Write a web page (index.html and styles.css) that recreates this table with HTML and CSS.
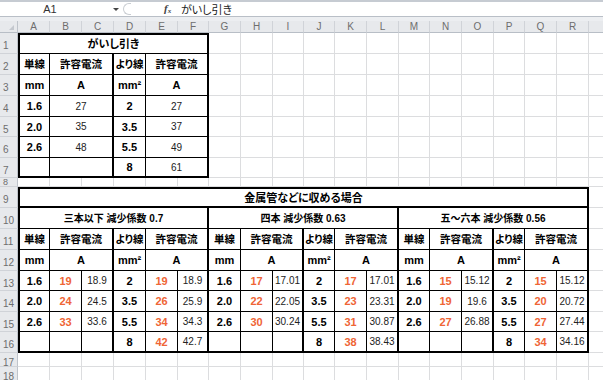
FILE: index.html
```html
<!DOCTYPE html>
<html lang="ja">
<head>
<meta charset="utf-8">
<title>がいし引き</title>
<link rel="stylesheet" href="styles.css">
</head>
<body>
<div class="formula-bar">
  <div class="name-box"><span class="name">A1</span><span class="caret"></span></div>
  <div class="fx-area"><span class="paren"></span><span class="fx"><i>f</i><sub>x</sub></span></div>
  <div class="formula">がいし引き</div>
</div>
<div class="band"></div>
<div class="sheet">
  <div class="row heads">
    <div class="corner"><span class="tri"></span></div>
    <div class="ch">A</div><div class="ch">B</div><div class="ch">C</div><div class="ch">D</div><div class="ch">E</div><div class="ch">F</div>
    <div class="ch">G</div><div class="ch">H</div><div class="ch">I</div><div class="ch">J</div><div class="ch">K</div><div class="ch">L</div>
    <div class="ch">M</div><div class="ch">N</div><div class="ch">O</div><div class="ch">P</div><div class="ch">Q</div><div class="ch">R</div><div class="ch"></div>
  </div>

  <div class="row h21"><div class="rh">1</div><div class="c s6 bl bt br title">がいし引き</div></div>
  <div class="row h21"><div class="rh">2</div>
    <div class="c bl jp">単線</div><div class="c s2 br jp">許容電流</div><div class="c jp">より線</div><div class="c s2 br jp">許容電流</div>
  </div>
  <div class="row h21"><div class="rh">3</div>
    <div class="c bl b">mm</div><div class="c s2 br b">A</div><div class="c b">mm²</div><div class="c s2 br b">A</div>
  </div>
  <div class="row h21"><div class="rh">4</div>
    <div class="c bl b">1.6</div><div class="c s2 br num">27</div><div class="c b">2</div><div class="c s2 br num">27</div>
  </div>
  <div class="row h20"><div class="rh">5</div>
    <div class="c bl b">2.0</div><div class="c s2 br num">35</div><div class="c b">3.5</div><div class="c s2 br num">37</div>
  </div>
  <div class="row h21"><div class="rh">6</div>
    <div class="c bl b">2.6</div><div class="c s2 br num">48</div><div class="c b">5.5</div><div class="c s2 br num">49</div>
  </div>
  <div class="row h20"><div class="rh">7</div>
    <div class="c bl bb"></div><div class="c s2 br bb"></div><div class="c b bb">8</div><div class="c s2 br bb num">61</div>
  </div>
  <div class="row h9"><div class="rh short">8</div></div>

  <div class="row h21"><div class="rh">9</div><div class="c s18 bl bt br bb title">金属管などに収める場合</div></div>
  <div class="row h21"><div class="rh">10</div>
    <div class="c s6 bl br sub">三本以下 減少係数 0.7</div>
    <div class="c s6 br sub">四本 減少係数 0.63</div>
    <div class="c s6 br sub">五～六本 減少係数 0.56</div>
  </div>
  <div class="row h21"><div class="rh">11</div>
    <div class="c bl jp">単線</div><div class="c s2 br jp">許容電流</div><div class="c jp">より線</div><div class="c s2 br jp">許容電流</div>
    <div class="c jp">単線</div><div class="c s2 br jp">許容電流</div><div class="c jp">より線</div><div class="c s2 br jp">許容電流</div>
    <div class="c jp">単線</div><div class="c s2 br jp">許容電流</div><div class="c jp">より線</div><div class="c s2 br jp">許容電流</div>
  </div>
  <div class="row h21"><div class="rh">12</div>
    <div class="c bl b">mm</div><div class="c s2 br b">A</div><div class="c b">mm²</div><div class="c s2 br b">A</div>
    <div class="c b">mm</div><div class="c s2 br b">A</div><div class="c b">mm²</div><div class="c s2 br b">A</div>
    <div class="c b">mm</div><div class="c s2 br b">A</div><div class="c b">mm²</div><div class="c s2 br b">A</div>
  </div>
  <div class="row h20"><div class="rh">13</div>
    <div class="c bl b">1.6</div><div class="c o">19</div><div class="c br num">18.9</div><div class="c b">2</div><div class="c o">19</div><div class="c br num">18.9</div>
    <div class="c b">1.6</div><div class="c o">17</div><div class="c br num">17.01</div><div class="c b">2</div><div class="c o">17</div><div class="c br num">17.01</div>
    <div class="c b">1.6</div><div class="c o">15</div><div class="c br num">15.12</div><div class="c b">2</div><div class="c o">15</div><div class="c br num">15.12</div>
  </div>
  <div class="row h21"><div class="rh">14</div>
    <div class="c bl b">2.0</div><div class="c o">24</div><div class="c br num">24.5</div><div class="c b">3.5</div><div class="c o">26</div><div class="c br num">25.9</div>
    <div class="c b">2.0</div><div class="c o">22</div><div class="c br num">22.05</div><div class="c b">3.5</div><div class="c o">23</div><div class="c br num">23.31</div>
    <div class="c b">2.0</div><div class="c o">19</div><div class="c br num">19.6</div><div class="c b">3.5</div><div class="c o">20</div><div class="c br num">20.72</div>
  </div>
  <div class="row h20"><div class="rh">15</div>
    <div class="c bl b">2.6</div><div class="c o">33</div><div class="c br num">33.6</div><div class="c b">5.5</div><div class="c o">34</div><div class="c br num">34.3</div>
    <div class="c b">2.6</div><div class="c o">30</div><div class="c br num">30.24</div><div class="c b">5.5</div><div class="c o">31</div><div class="c br num">30.87</div>
    <div class="c b">2.6</div><div class="c o">27</div><div class="c br num">26.88</div><div class="c b">5.5</div><div class="c o">27</div><div class="c br num">27.44</div>
  </div>
  <div class="row h21"><div class="rh">16</div>
    <div class="c bl bb"></div><div class="c bb"></div><div class="c br bb"></div><div class="c b bb">8</div><div class="c o bb">42</div><div class="c br bb num">42.7</div>
    <div class="c bb"></div><div class="c bb"></div><div class="c br bb"></div><div class="c b bb">8</div><div class="c o bb">38</div><div class="c br bb num">38.43</div>
    <div class="c bb"></div><div class="c bb"></div><div class="c br bb"></div><div class="c b bb">8</div><div class="c o bb">34</div><div class="c br bb num">34.16</div>
  </div>
  <div class="row h14"><div class="rh">17</div></div>
  <div class="row h14"><div class="rh">18</div></div>
</div>
</body>
</html>
```
FILE: styles.css
```css
* { box-sizing: border-box; }

html, body {
  margin: 0;
  padding: 0;
}

body {
  width: 603px;
  height: 380px;
  overflow: hidden;
  background: #ffffff;
  color: #000;
  font-family: "Liberation Sans", "Noto Sans CJK JP", sans-serif;
  font-feature-settings: "palt";
}

/* ---------- formula bar ---------- */
.formula-bar {
  display: flex;
  align-items: center;
  height: 16px;
  border-top: 2px solid #c6cbd2;
  background: #fff;
  font-size: 11px;
  color: #333;
}

.name-box {
  width: 121px;
  display: flex;
  align-items: center;
}

.name {
  width: 100px;
  text-align: center;
}

.caret {
  margin-left: 13px;
  width: 0;
  height: 0;
  border-left: 3px solid transparent;
  border-right: 3px solid transparent;
  border-top: 3px solid #444;
  margin-top: 1px;
}

.fx-area {
  width: 60px;
  display: flex;
  align-items: center;
}

.paren {
  margin-left: 2px;
  width: 8px;
  height: 12px;
  border: 1px solid #c9cdd2;
  border-right: none;
  border-radius: 6px 0 0 6px;
}

.fx {
  margin-left: 33px;
  font-family: "Liberation Serif", serif;
  font-weight: bold;
  font-size: 11px;
  color: #444;
  line-height: 1;
}

.fx sub {
  font-size: 7px;
  font-style: italic;
  vertical-align: -1px;
}

.formula {
  font-size: 11px;
  color: #222;
}

.band {
  height: 5px;
  border-top: 1px solid #b9bfc7;
  background: #eceef1;
}

/* ---------- sheet ---------- */
.sheet {
  --grid: #dcdddf;
  background: linear-gradient(90deg,
    transparent 49px, var(--grid) 49px 50px,
    transparent 50px 81px, var(--grid) 81px 82px,
    transparent 82px 113px, var(--grid) 113px 114px,
    transparent 114px 145px, var(--grid) 145px 146px,
    transparent 146px 177px, var(--grid) 177px 178px,
    transparent 178px 208px, var(--grid) 208px 209px,
    transparent 209px 240px, var(--grid) 240px 241px,
    transparent 241px 272px, var(--grid) 272px 273px,
    transparent 273px 303px, var(--grid) 303px 304px,
    transparent 304px 334px, var(--grid) 334px 335px,
    transparent 335px 366px, var(--grid) 366px 367px,
    transparent 367px 398px, var(--grid) 398px 399px,
    transparent 399px 429px, var(--grid) 429px 430px,
    transparent 430px 461px, var(--grid) 461px 462px,
    transparent 462px 493px, var(--grid) 493px 494px,
    transparent 494px 524px, var(--grid) 524px 525px,
    transparent 525px 556px, var(--grid) 556px 557px,
    transparent 557px 588px, var(--grid) 588px 589px,
    transparent 589px);
}

.row {
  display: grid;
  grid-template-columns: 18px 32px 32px 32px 32px 32px 31px 32px 32px 31px 31px 32px 32px 31px 32px 32px 31px 32px 32px 32px;
  background: linear-gradient(to top, var(--grid) 1px, transparent 1px);
  width: 620px;
}

.h21 { height: 21px; }
.h20 { height: 20px; }
.h14 { height: 14px; }
.h9 { height: 9px; }

.heads { height: 12px; }

.corner,
.ch {
  background: #e7e9ec;
  border-right: 1px solid #d0d3d8;
  border-bottom: 1px solid #b8bec6;
}

.corner {
  position: relative;
  border-right-color: #bfc4cb;
}

.tri {
  position: absolute;
  right: 3px;
  bottom: 2px;
  width: 0;
  height: 0;
  border-left: 5px solid transparent;
  border-bottom: 5px solid #c4c8ce;
}

.ch {
  font-size: 10px;
  line-height: 11px;
  text-align: center;
  color: #6e6e6e;
}

.rh {
  background: #e7e9ec;
  border-right: 1px solid #bfc4cb;
  border-bottom: 1px solid #d0d3d8;
  color: #6e6e6e;
  font-size: 10px;
  line-height: 10px;
  padding: 6px 0 0 3px;
  display: flex;
  align-items: center;
  overflow: hidden;
}

.rh.short {
  padding-top: 0;
  font-size: 9px;
  line-height: 8px;
}

/* ---------- table cells ---------- */
.c {
  background: #fff;
  border-right: 1px solid #000;
  border-bottom: 1px solid #000;
  display: flex;
  align-items: center;
  justify-content: center;
  white-space: nowrap;
  font-size: 11px;
  line-height: 1;
  padding-top: 1px;
  overflow: hidden;
}

.bl { border-left: 2px solid #000; }
.bt { border-top: 2px solid #000; }
.br { border-right-width: 2px; }
.bb { border-bottom-width: 2px; }

.s2 { grid-column: span 2; }
.s6 { grid-column: span 6; }
.s18 { grid-column: span 18; }

.b { font-weight: bold; }

.num {
  font-size: 10px;
  color: #222;
}

.o {
  color: #ef6535;
  font-weight: bold;
}

.jp {
  font-weight: bold;
  font-size: 10.5px;
}

.title {
  font-weight: bold;
  font-size: 11px;
}

.sub {
  font-weight: bold;
  font-size: 10px;
}
```
